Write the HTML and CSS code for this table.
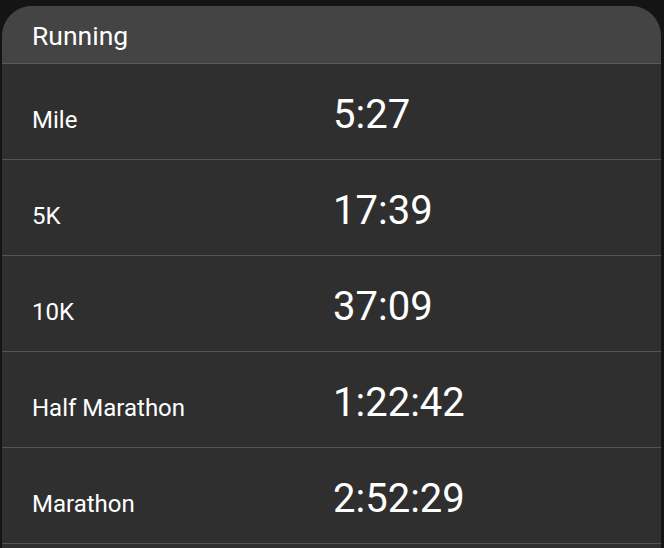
FILE: index.html
```html
<!DOCTYPE html>
<html>
<head>
<meta charset="utf-8">
<link rel="stylesheet" href="styles.css">
</head>
<body>
<div class="card">
  <div class="card-header">Running</div>
  <div class="row"><span class="label">Mile</span><span class="time">5:27</span></div>
  <div class="row"><span class="label">5K</span><span class="time">17:39</span></div>
  <div class="row"><span class="label">10K</span><span class="time">37:09</span></div>
  <div class="row"><span class="label">Half Marathon</span><span class="time">1:22:42</span></div>
  <div class="row"><span class="label">Marathon</span><span class="time">2:52:29</span></div>
</div>
</body>
</html>
```
FILE: styles.css
```css
html, body {
  margin: 0;
  padding: 0;
  background: #141414;
  height: 100%;
  overflow: hidden;
}
body {
  padding: 6px 3px 0 2px;
  box-sizing: border-box;
  font-family: Roboto, "Noto Sans", sans-serif;
  color: #ffffff;
}
.card {
  background: #2f2f2f;
  border-radius: 30px 30px 0 0;
  overflow: hidden;
  height: 100%;
}
.card-header {
  background: #444444;
  height: 58px;
  box-sizing: border-box;
  border-bottom: 1px solid #5a5a5a;
  padding-left: 30px;
  padding-top: 3px;
  font-size: 26.5px;
  line-height: 54px;
}
.row {
  display: flex;
  align-items: baseline;
  height: 96px;
  box-sizing: border-box;
  border-bottom: 1px solid #555555;
  padding-left: 30px;
  padding-top: 27px;
}
.label {
  font-size: 24px;
  width: 301px;
}
.time {
  font-size: 40px;
}
```
